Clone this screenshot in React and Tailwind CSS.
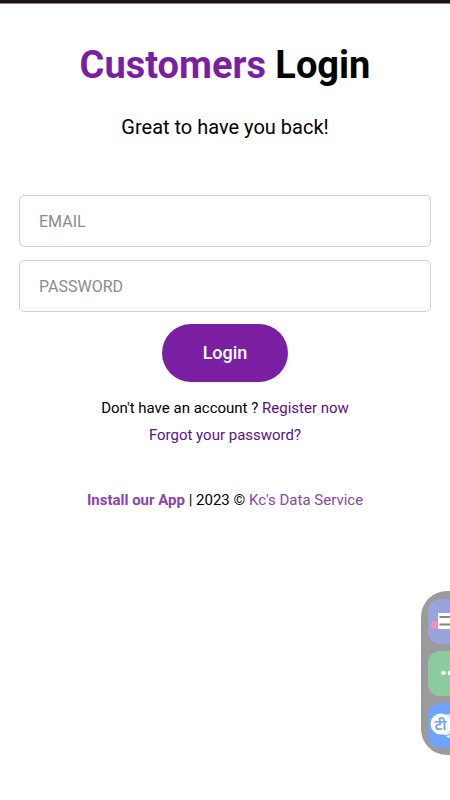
import React, { useState } from 'react';

const FIELDS = [
  { id: 'email', type: 'email', placeholder: 'EMAIL' },
  { id: 'password', type: 'password', placeholder: 'PASSWORD' },
];

// Floating shortcuts docked to the right edge of the screen
function SideDock() {
  return (
    <div className="fixed right-0 bottom-[45px] w-[29px] h-[164px] pl-[7px] flex flex-col justify-center gap-[7px] rounded-l-[26px] bg-[#9b9b9b] overflow-hidden">
      <button type="button" aria-label="Notes" className="h-[45px] rounded-l-xl bg-[#9ba3dc]">
        <svg viewBox="0 0 22 45" className="w-full h-full">
          <circle cx="6.500" cy="25.500" r="3.800" fill="#f68fb8" />
          <rect x="10" y="14" width="12" height="16" fill="#fff" />
          <path d="M11.500 18H22M11.500 25.500H22" stroke="#85858a" strokeWidth="2" />
        </svg>
      </button>
      <button type="button" aria-label="More" className="h-[45px] rounded-l-xl bg-[#8ccb9e]">
        <svg viewBox="0 0 22 45" className="w-full h-full">
          <circle cx="15.500" cy="22" r="2.300" fill="#fff" />
          <circle cx="22" cy="22" r="2.300" fill="#fff" />
        </svg>
      </button>
      <button type="button" aria-label="Translate" className="h-[45px] rounded-l-xl bg-[#6ea4fb]">
        <svg viewBox="0 0 22 45" className="w-full h-full">
          <path d="M18 12q2-1 4-1v24c-2 0-4-1-5-3z" fill="#c5effb" />
          <circle cx="13" cy="21" r="10.500" fill="#fff" />
          <path d="M17 27l5 5h-7z" fill="#fff" />
          <path d="M15 32.500q4 0 7-1" fill="none" stroke="#6ea4fb" strokeWidth="1" />
          <text x="12.500" y="26.500" textAnchor="middle" fontSize="15" fontWeight="600" fill="#6ea4fb" fontFamily="'Noto Sans', sans-serif">टी</text>
        </svg>
      </button>
    </div>
  );
}

function App() {
  const [values, setValues] = useState({ email: '', password: '' });

  const handleChange = (e) => {
    setValues({ ...values, [e.target.id]: e.target.value });
  };

  return (
    <div className="min-h-screen bg-white text-black font-['Roboto',sans-serif]">
      <div className="h-1 bg-[#1c1113] border-b border-[#8a8485]" />

      <main className="px-[19px] pt-9 text-center">
        <h1 className="text-[38px] leading-[50px] font-bold">
          <span className="text-[#7b1fa2]">Customers</span> Login
        </h1>
        <p className="mt-[23px] text-xl leading-7">Great to have you back!</p>

        <form className="mt-[54px]" onSubmit={(e) => e.preventDefault()}>
          <div className="flex flex-col gap-[13px]">
            {FIELDS.map((field) => (
              <input
                key={field.id}
                id={field.id}
                type={field.type}
                aria-label={field.placeholder}
                placeholder={field.placeholder}
                value={values[field.id]}
                onChange={handleChange}
                className="w-full h-[52px] px-[19px] text-base rounded-[5px] border border-[#d2d2d2] placeholder:text-[#8c8c8c]"
              />
            ))}
          </div>
          <button
            type="submit"
            className="mt-3 w-[126px] h-[58px] rounded-full bg-[#7b1fa2] text-white text-lg font-medium"
          >
            Login
          </button>
        </form>

        <div className="mt-[13px] text-[15px] leading-[27px]">
          <p>
            Don't have an account ? <a href="#register" className="text-[#5b1187]">Register now</a>
          </p>
          <p>
            <a href="#forgot" className="text-[#5b1187]">Forgot your password?</a>
          </p>
        </div>

        <footer className="mt-[38px] text-[15px] leading-[27px]">
          <a href="#install" className="font-bold text-[#8e44ad]">Install our App</a> | 2023 ©{' '}
          <a href="#home" className="text-[#8e44ad]">Kc's Data Service</a>
        </footer>
      </main>

      <SideDock />
    </div>
  );
}

export default App;
